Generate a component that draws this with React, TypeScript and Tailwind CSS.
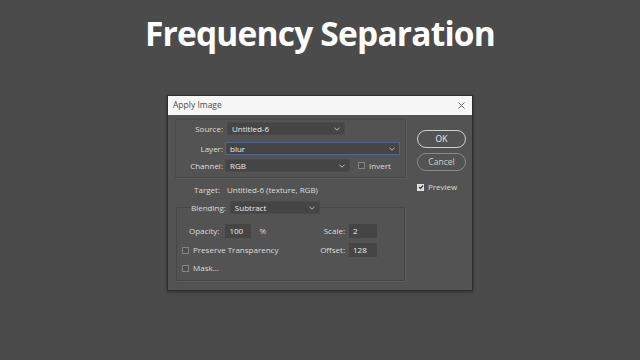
import React from 'react';

const Chevron = () => (
  <svg width="6" height="4" viewBox="0 0 6 4" className="shrink-0">
    <path d="M0.5 0.8 L3 3.2 L5.5 0.8" fill="none" stroke="#bdbdbd" strokeWidth="1" />
  </svg>
);

const Select = ({ value, width, focused = false }: { value: string; width: string; focused?: boolean }) => (
  <div
    className={`${width} h-[13px] flex items-center justify-between pl-[4px] pr-[4px] bg-[#454545] border ${
      focused ? 'border-[#3f66b8]' : 'border-[#4a4a4a]'
    }`}
  >
    <span className="text-[#ececec] leading-none">{value}</span>
    <Chevron />
  </div>
);

const Field = ({ value, width }: { value: string; width: string }) => (
  <div className={`${width} h-[14px] flex items-center pl-[4px] bg-[#454545] text-[#ececec] leading-none`}>{value}</div>
);

const Check = ({ checked = false }: { checked?: boolean }) =>
  checked ? (
    <div className="w-[7px] h-[7px] bg-[#e2e2e2] flex items-center justify-center shrink-0">
      <svg width="6" height="6" viewBox="0 0 6 6">
        <path d="M1 3 L2.5 4.5 L5 1.5" fill="none" stroke="#3a3a3a" strokeWidth="1.2" />
      </svg>
    </div>
  ) : (
    <div className="w-[7px] h-[7px] border border-[#858585] bg-[#4d4d4d] shrink-0" />
  );

const App: React.FC = () => {
  return (
    <div className="w-[640px] h-[360px] bg-[#4b4b4b] flex flex-col items-center overflow-hidden font-['Open_Sans',sans-serif]">
      <h1 className="mt-[13px] h-[40px] leading-[40px] text-[33.5px] font-bold text-white tracking-[-0.8px]">
        Frequency Separation
      </h1>

      {/* Apply Image dialog */}
      <div className="mt-[42px] w-[306px] h-[196px] bg-[#535353] border border-[#2e2e2e] shadow-[0_1px_3px_rgba(0,0,0,0.4)] flex flex-col text-[8px] text-[#dddddd]">
        <div className="h-[19px] shrink-0 bg-[#f7f7f7] flex items-center justify-between pl-[5px] pr-[7px]">
          <span className="text-[8.5px] text-[#4a4a4a] leading-none">Apply Image</span>
          <svg width="7" height="7" viewBox="0 0 7 7">
            <path d="M0.5 0.5 L6.5 6.5 M6.5 0.5 L0.5 6.5" stroke="#555" strokeWidth="0.9" />
          </svg>
        </div>

        <div className="flex flex-1">
          {/* left column */}
          <div className="ml-[7px] w-[231px] pt-[4px] flex flex-col">
            <div className="border border-[#4a4a4a] shadow-[1px_1px_0_#5c5c5c] pt-[2px] pb-[5px] flex flex-col">
              <div className="flex items-center h-[13px]">
                <span className="w-[47px] text-right leading-none">Source:</span>
                <div className="ml-[4px]">
                  <Select value="Untitled-6" width="w-[118px]" />
                </div>
              </div>
              <div className="flex items-center h-[13px] mt-[7px]">
                <span className="w-[47px] text-right leading-none">Layer:</span>
                <div className="ml-[2px]">
                  <Select value="blur" width="w-[175px]" focused />
                </div>
              </div>
              <div className="flex items-center h-[13px] mt-[4px]">
                <span className="w-[47px] text-right leading-none">Channel:</span>
                <div className="ml-[2px]">
                  <Select value="RGB" width="w-[125px]" />
                </div>
                <div className="ml-[8px] flex items-center gap-[4px]">
                  <Check />
                  <span className="leading-none">Invert</span>
                </div>
              </div>
            </div>

            <div className="flex items-center h-[11px] mt-[6px]">
              <span className="w-[45px] text-right leading-none">Target:</span>
              <span className="ml-[7px] leading-none">Untitled-6 (texture, RGB)</span>
            </div>

            <fieldset className="mt-[6px] ml-px w-[229px] border border-[#474747] shadow-[1px_1px_0_#5c5c5c] pl-[5px] pr-[27px] pb-[7px]">
              <legend className="ml-[9px] flex items-center h-[13px]">
                <span className="leading-none">Blending:</span>
                <div className="ml-[4px]">
                  <Select value="Subtract" width="w-[90px]" />
                </div>
              </legend>

              <div className="mt-[10px] h-[14px] flex items-center justify-between">
                <div className="flex items-center pl-[7px]">
                  <span className="leading-none">Opacity:</span>
                  <div className="ml-[6px]">
                    <Field value="100" width="w-[26px]" />
                  </div>
                  <span className="ml-[8px] leading-none">%</span>
                </div>
                <div className="flex items-center">
                  <span className="leading-none">Scale:</span>
                  <div className="ml-[4px]">
                    <Field value="2" width="w-[28px]" />
                  </div>
                </div>
              </div>

              <div className="mt-[5px] h-[14px] flex items-center justify-between">
                <div className="flex items-center gap-[4px]">
                  <Check />
                  <span className="leading-none">Preserve Transparency</span>
                </div>
                <div className="flex items-center">
                  <span className="leading-none">Offset:</span>
                  <div className="ml-[4px]">
                    <Field value="128" width="w-[28px]" />
                  </div>
                </div>
              </div>

              <div className="mt-[6px] h-[10px] flex items-center gap-[4px]">
                <Check />
                <span className="leading-none">Mask...</span>
              </div>
            </fieldset>
          </div>

          {/* right column */}
          <div className="ml-[11px] pt-[15px] flex flex-col">
            <button className="w-[49px] h-[18px] rounded-full border border-[#cfcfcf] text-[8.5px] text-[#f0f0f0] leading-none">
              OK
            </button>
            <button className="mt-[5px] w-[49px] h-[18px] rounded-full border border-[#8a8a8a] text-[8.5px] text-[#d0d0d0] leading-none">
              Cancel
            </button>
            <div className="mt-[12px] flex items-center gap-[4px]">
              <Check checked />
              <span className="leading-none">Preview</span>
            </div>
          </div>
        </div>
      </div>
    </div>
  );
};

export default App;
